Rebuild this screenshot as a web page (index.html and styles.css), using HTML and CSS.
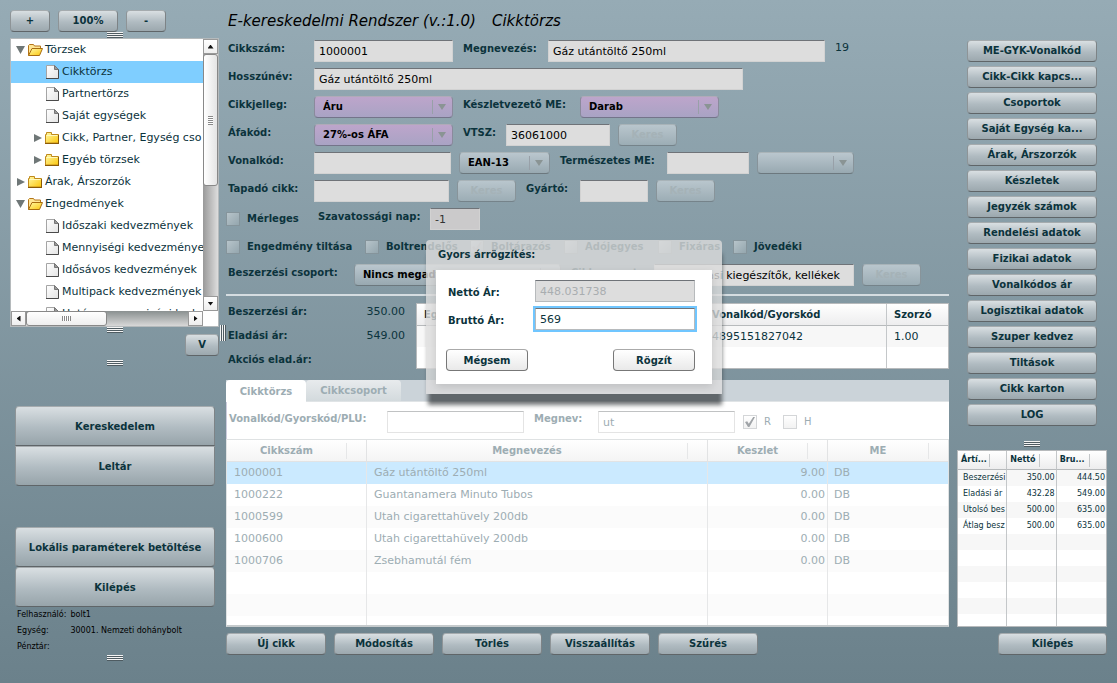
FILE: index.html
```html
<!DOCTYPE html>
<html lang="hu">
<head>
<meta charset="utf-8">
<title>E-kereskedelmi Rendszer</title>
<link rel="stylesheet" href="styles.css">
</head>
<body>
<svg class="defs" aria-hidden="true">
  <defs>
    <linearGradient id="gold" x1="0" y1="0" x2="1" y2="1"><stop offset="0" stop-color="#fff9a8"/><stop offset="1" stop-color="#fbc60a"/></linearGradient>
    <linearGradient id="paper" x1="0" y1="0" x2="1" y2="1"><stop offset="0" stop-color="#fff"/><stop offset="1" stop-color="#e4e4e4"/></linearGradient>
    <symbol id="doc" viewBox="0 0 13 14"><path d="M.5 .5h8l4 4v9H.5z" fill="url(#paper)" stroke="#a5a5a5"/><path d="M12.500 4v9.500H0" fill="none" stroke="#4a4a4a"/><path d="M8.500 .5v4h4z" fill="#999" stroke="#777"/></symbol>
    <symbol id="folder" viewBox="0 0 14 12"><path d="M.5 11V2.500h1V.5h5v2h7V11z" fill="url(#gold)" stroke="#c08a1c"/><path d="M1.500 3.500h11" stroke="#fff9bd"/><path d="M0 11.500h14M13.500 3v8" stroke="#8a5a06"/></symbol>
    <symbol id="folder-open" viewBox="0 0 15 12"><path d="M.5 11.500V1.500l1-1h4l1 1.500h6V5" fill="#ffe694" stroke="#b4751a"/><path d="M.5 11.500l3.500-7h10.500l-3 7z" fill="url(#gold)" stroke="#a86c10"/></symbol>
  </defs>
</svg>
<div class="app">
  <aside class="side">
    <div class="zoom">
      <button class="btn w40">+</button><button class="btn w60">100%</button><button class="btn w40">-</button>
    </div>
    <i class="grip"></i>
    <section class="tree">
      <ul class="tree-list">
        <li><b class="tw open"></b><svg class="fo"><use href="#folder-open"/></svg>Törzsek</li>
        <li class="leaf sel"><svg class="dc"><use href="#doc"/></svg>Cikktörzs</li>
        <li class="leaf"><svg class="dc"><use href="#doc"/></svg>Partnertörzs</li>
        <li class="leaf"><svg class="dc"><use href="#doc"/></svg>Saját egységek</li>
        <li class="sub"><b class="tw"></b><svg class="fc"><use href="#folder"/></svg>Cikk, Partner, Egység cso</li>
        <li class="sub"><b class="tw"></b><svg class="fc"><use href="#folder"/></svg>Egyéb törzsek</li>
        <li><b class="tw"></b><svg class="fc"><use href="#folder"/></svg>Árak, Árszorzók</li>
        <li><b class="tw open"></b><svg class="fo"><use href="#folder-open"/></svg>Engedmények</li>
        <li class="leaf"><svg class="dc"><use href="#doc"/></svg>Időszaki kedvezmények</li>
        <li class="leaf"><svg class="dc"><use href="#doc"/></svg>Mennyiségi kedvezmények</li>
        <li class="leaf"><svg class="dc"><use href="#doc"/></svg>Idősávos kedvezmények</li>
        <li class="leaf"><svg class="dc"><use href="#doc"/></svg>Multipack kedvezmények</li>
        <li class="leaf"><svg class="dc"><use href="#doc"/></svg>Határos mennyiségi kedv.</li>
      </ul>
      <div class="vbar"><b class="sb up"></b><div class="vthumb"></div><div class="vrest"></div><b class="sb down"></b></div>
      <div class="hbar"><b class="sb left"></b><div class="hthumb"></div><div class="hrest"></div><b class="sb next"></b></div>
    </section>
    <i class="grip"></i>
    <button class="btn vbtn">V</button>
    <i class="grip low"></i>
    <nav class="stack first"><button>Kereskedelem</button><button>Leltár</button></nav>
    <nav class="stack second"><button>Lokális paraméterek betöltése</button><button>Kilépés</button></nav>
    <dl class="user"><dt>Felhasználó:</dt><dd>bolt1</dd><dt>Egység:</dt><dd>30001. Nemzeti dohánybolt</dd><dt>Pénztár:</dt><dd></dd></dl>
    <i class="grip"></i>
  </aside>
  <div class="split"><i class="vgrip"></i></div>

  <main class="main">
    <h1><span>E-kereskedelmi Rendszer (v.:1.0)</span><span>Cikktörzs</span></h1>
    <form class="form">
      <div class="row"><label class="key" for="f1">Cikkszám:</label><input class="w139" id="f1" value="1000001"><label class="w77" for="f2">Megnevezés:</label><input class="w277" id="f2" value="Gáz utántöltő 250ml"><span>19</span></div>
      <div class="row"><label class="key" for="f3">Hosszúnév:</label><input class="w429" id="f3" value="Gáz utántöltő 250ml"></div>
      <div class="row"><label class="key" for="f4">Cikkjelleg:</label><span class="combo pink w139"><select id="f4"><option>Áru</option></select></span><label class="w109" for="f5">Készletvezető ME:</label><span class="combo pink w139"><select id="f5"><option>Darab</option></select></span></div>
      <div class="row"><label class="key" for="f6">Áfakód:</label><span class="combo pink w139"><select id="f6"><option>27%-os ÁFA</option></select></span><label class="w35" for="f7">VTSZ:</label><input class="w104" id="f7" value="36061000"><button type="button" class="btn off" disabled>Keres</button></div>
      <div class="row"><label class="key" for="f8">Vonalkód:</label><input class="w137" id="f8"><span class="combo w91"><select id="f9" aria-label="Vonalkód típusa"><option>EAN-13</option></select></span><label class="w99" for="f10">Természetes ME:</label><input class="w82" id="f10"><span class="combo w97"><select aria-label="Mértékegység"><option></option></select></span></div>
      <div class="row"><label class="key" for="f11">Tapadó cikk:</label><input class="w135" id="f11"><button type="button" class="btn off" disabled>Keres</button><label class="w46" for="f12">Gyártó:</label><input class="w68" id="f12"><button type="button" class="btn off" disabled>Keres</button></div>
      <div class="row"><label class="chk w80"><input type="checkbox">Mérleges</label><label class="w106" for="f13">Szavatossági nap:</label><input class="w50 dim" id="f13" value="-1"></div>
      <div class="row"><label class="chk w131"><input type="checkbox">Engedmény tiltása</label><label class="chk w97"><input type="checkbox">Boltrendelős</label><label class="chk w84"><input type="checkbox" checked>Boltárazós</label><label class="chk w84"><input type="checkbox">Adójegyes</label><label class="chk w65"><input type="checkbox">Fixáras</label><label class="chk"><input type="checkbox">Jövedéki</label></div>
      <div class="row"><label class="w118" for="f14">Beszerzési csoport:</label><span class="combo w207"><select id="f14"><option>Nincs megadva</option></select></span><label class="w75" for="f15">Cikkcsoport:</label><input class="w200" id="f15" value="Dohányzási kiegészítők, kellékek"><button type="button" class="btn off" disabled>Keres</button></div>
    </form>
    <hr>
    <section class="prices">
      <dl><dt>Beszerzési ár:</dt><dd>350.00</dd><dt>Eladási ár:</dt><dd>549.00</dd><dt>Akciós elad.ár:</dt><dd></dd></dl>
      <div class="codes-box">
      <table class="codes">
        <colgroup><col><col class="c182"><col class="c61"></colgroup>
        <thead><tr><th>Egység</th><th>Vonalkód/Gyorskód</th><th>Szorzó</th></tr></thead>
        <tbody><tr><td></td><td>4895151827042</td><td>1.00</td></tr><tr><td></td><td></td><td></td></tr></tbody>
      </table>
      </div>
    </section>
    <section class="browser">
      <div class="tabs"><button class="tab on">Cikktörzs</button><button class="tab">Cikkcsoport</button></div>
      <div class="search"><label class="w148" for="s1">Vonalkód/Gyorskód/PLU:</label><input class="w137" id="s1"><label class="w54" for="s2">Megnev:</label><input class="w137" id="s2" value="ut"><label class="chk"><input type="checkbox" checked>R</label><label class="chk"><input type="checkbox">H</label></div>
      <div class="list-box">
        <table class="list">
          <colgroup><col class="c140"><col><col class="c120"><col class="c120"></colgroup>
          <thead><tr><th>Cikkszám</th><th>Megnevezés</th><th>Keszlet</th><th>ME</th></tr></thead>
          <tbody>
            <tr class="cur"><td>1000001</td><td>Gáz utántöltő 250ml</td><td>9.00</td><td>DB</td></tr>
            <tr><td>1000222</td><td>Guantanamera Minuto Tubos</td><td>0.00</td><td>DB</td></tr>
            <tr><td>1000599</td><td>Utah cigarettahüvely 200db</td><td>0.00</td><td>DB</td></tr>
            <tr><td>1000600</td><td>Utah cigarettahüvely 200db</td><td>0.00</td><td>DB</td></tr>
            <tr><td>1000706</td><td>Zsebhamutál fém</td><td>0.00</td><td>DB</td></tr>
            <tr><td></td><td></td><td></td><td></td></tr>
            <tr><td></td><td></td><td></td><td></td></tr>
            <tr><td></td><td></td><td></td><td></td></tr>
          </tbody>
        </table>
      </div>
    </section>
    <div class="actions"><button class="btn">Új cikk</button><button class="btn">Módosítás</button><button class="btn">Törlés</button><button class="btn">Visszaállítás</button><button class="btn">Szűrés</button></div>
  </main>

  <aside class="right">
    <nav class="links">
      <button class="btn">ME-GYK-Vonalkód</button><button class="btn">Cikk-Cikk kapcs...</button><button class="btn">Csoportok</button><button class="btn">Saját Egység ka...</button><button class="btn">Árak, Árszorzók</button><button class="btn">Készletek</button><button class="btn">Jegyzék számok</button><button class="btn">Rendelési adatok</button><button class="btn">Fizikai adatok</button><button class="btn">Vonalkódos ár</button><button class="btn">Logisztikai adatok</button><button class="btn">Szuper kedvez</button><button class="btn">Tiltások</button><button class="btn">Cikk karton</button><button class="btn">LOG</button>
    </nav>
    <i class="grip"></i>
    <div class="sum-box">
      <table class="sum">
        <thead><tr><th>Ártí...</th><th>Nettó</th><th>Bru...</th></tr></thead>
        <tbody>
          <tr><td>Beszerzési</td><td>350.00</td><td>444.50</td></tr>
          <tr><td>Eladási ár</td><td>432.28</td><td>549.00</td></tr>
          <tr><td>Utolsó bes</td><td>500.00</td><td>635.00</td></tr>
          <tr><td>Átlag besz</td><td>500.00</td><td>635.00</td></tr>
          <tr><td></td><td></td><td></td></tr><tr><td></td><td></td><td></td></tr><tr><td></td><td></td><td></td></tr><tr><td></td><td></td><td></td></tr><tr><td></td><td></td><td></td></tr><tr><td></td><td></td><td></td></tr>
        </tbody>
      </table>
    </div>
    <button class="btn exit">Kilépés</button>
  </aside>
</div>

<div class="dialog" role="dialog" aria-labelledby="dlg">
  <h2 id="dlg">Gyors árrögzítés:</h2>
  <form class="dialog-body">
    <div class="drow"><label for="d1">Nettó Ár:</label><input id="d1" value="448.031738" disabled></div>
    <div class="drow"><label for="d2">Bruttó Ár:</label><input id="d2" class="focus" value="569"></div>
    <div class="dbtns"><button type="button">Mégsem</button><button type="button">Rögzít</button></div>
  </form>
</div>
</body>
</html>
```
FILE: styles.css
```css
* { box-sizing: border-box; }
body {
  margin: 0;
  font: 11px/16px Verdana, "DejaVu Sans", sans-serif;
  color: #0b333c;
  background: linear-gradient(#96abb5, #6b818b) fixed;
}
h1, h2, dl, dd, ul { margin: 0; padding: 0; }
label, dt, th, button, select { font-weight: bold; font-size: 10px; }
button, input, select { font-family: inherit; color: inherit; margin: 0; }
.defs { position: absolute; width: 0; height: 0; }
.app { display: flex; min-height: 100vh; }

/* buttons */
.btn {
  height: 22px; padding: 0; line-height: 16px; white-space: nowrap;
  border: 1px solid; border-color: #a5abae #7d8386 #5f6568 #8e9497; border-radius: 4px;
  background: linear-gradient(#d9dfe2, #b0bbc1 55%, #9ca8ae);
}
.btn.off {
  width: 59px; color: #a5b2b7; border-color: #a8b3b8 #88949a #75838a #88949a;
  background: linear-gradient(#b9c6cd, #9cadb5);
}
.grip {
  display: block; flex: none; width: 16px; height: 6px; align-self: center;
  background: repeating-linear-gradient(#f4f4f4 0 1px, #4e5b61 1px 2px);
}
.vgrip {
  display: block; width: 6px; height: 16px;
  background: repeating-linear-gradient(90deg, #f4f4f4 0 1px, #4e5b61 1px 2px);
}

/* left column */
.side { width: 219px; padding: 10px 0 0 10px; display: flex; flex-direction: column; }
.zoom { display: flex; gap: 8px; }
.w40 { width: 40px; }
.w60 { width: 60px; }
.tree {
  display: grid; grid-template: 272px 15px / minmax(0, 1fr) 15px;
  border: 1px solid #b5babc; background: #fff; overflow: hidden;
}
.tree-list { list-style: none; overflow: hidden; }
.tree-list li { height: 22px; display: flex; align-items: center; gap: 2px; padding-left: 5px; white-space: nowrap; }
.tree-list .leaf { padding-left: 35px; gap: 3px; }
.tree-list .sub { padding-left: 22px; }
.tree-list .sel { background: #7fceff; }
.tw { flex: none; width: 10px; height: 8px; background: #6f7777; clip-path: polygon(10% 0, 90% 50%, 10% 100%); }
.tw.open { clip-path: polygon(0 0, 90% 0, 45% 100%); }
.fo { flex: none; width: 15px; height: 12px; }
.fc { flex: none; width: 14px; height: 12px; margin-right: 1px; }
.dc { flex: none; width: 13px; height: 14px; }
.vbar { display: flex; flex-direction: column; background: linear-gradient(90deg, #999, #ddd); }
.hbar { display: flex; background: linear-gradient(#8a9090, #d8d8d8); }
.sb { flex: none; width: 15px; height: 15px; border: 1px solid #999; background: linear-gradient(#fff, #eee); display: grid; place-items: center; }
.sb::after { content: ""; width: 6px; height: 4px; background: #111; clip-path: polygon(50% 0, 100% 100%, 0 100%); }
.down::after { clip-path: polygon(0 0, 100% 0, 50% 100%); }
.left::after { width: 4px; height: 6px; clip-path: polygon(100% 0, 100% 100%, 0 50%); }
.next::after { width: 4px; height: 6px; clip-path: polygon(0 0, 100% 50%, 0 100%); }
.vthumb, .hthumb { border: 1px solid #888; border-radius: 3px; display: grid; place-items: center; }
.vthumb { height: 132px; background: linear-gradient(90deg, #fff, #e4e4e4); }
.vthumb::after { content: ""; width: 5px; height: 9px; background: repeating-linear-gradient(#888 0 1px, #fff 1px 2px); }
.hthumb { width: 81px; background: linear-gradient(#fff, #eee); }
.hthumb::after { content: ""; width: 9px; height: 5px; background: repeating-linear-gradient(90deg, #888 0 1px, #fff 1px 2px); }
.vrest, .hrest { flex: 1; }
.vbtn { width: 34px; align-self: flex-end; margin-top: 1px; }
.grip.low { margin-top: 4px; }
.stack { display: flex; flex-direction: column; margin: 40px 4px 0 5px; }
.stack.second { margin-top: 41px; }
.stack button {
  height: 40px; border: 1px solid; border-color: #a5abae #7d8386 #5f6568 #8e9497;
  background: linear-gradient(#d9dfe2, #b0bbc1 55%, #97a4aa);
}
.first button:first-child { border-radius: 4px 4px 0 0; }
.first button:last-child { border-radius: 0 0 4px 4px; }
.second button { border-radius: 4px; }
.user { display: grid; grid-template-columns: auto 1fr; padding-left: 7px; color: #000; font-size: 8px; line-height: 16px; column-gap: 4px; }
.user dt { font-size: 8px; font-weight: normal; min-width: 47px; }
.user dd { min-height: 16px; }
.split { width: 7px; padding: 325px 0 0 1px; }

/* form */
.main { flex: 1; min-width: 0; display: flex; flex-direction: column; padding: 10px 0 28px; }
h1 { display: flex; gap: 16px; font-size: 15px; font-weight: normal; font-style: italic; line-height: 22px; padding-left: 2px; margin-bottom: 8px; color: #000; }
.form { display: flex; flex-direction: column; gap: 6px; }
.row { display: flex; gap: 8px; height: 22px; padding-left: 2px; white-space: nowrap; }
.row > * { flex: none; }
.row > label:not(.chk) { margin-left: 2px; padding-top: 1px; }
.row > label:first-child:not(.chk) { margin-left: 0; }
.row > span:last-child:not(.combo) { margin-left: 2px; }
.row input, .search input, .drow input {
  height: 22px; padding: 0 4px; font-size: 11px; color: #000; background: #ddd;
  border: 1px solid #d2d2d2; border-top-color: #6f7378; border-radius: 0;
}
.key { width: 78px; }
.w35 { width: 35px; }
.w46 { width: 46px; }
.w50 { width: 50px; }
.w54 { width: 54px; }
.w65 { width: 67px; }
.w68 { width: 68px; }
.w75 { width: 75px; }
.w77 { width: 77px; }
.w80 { width: 82px; }
.w82 { width: 82px; }
.w84 { width: 86px; }
.w91 { width: 91px; }
.w97 { width: 97px; }
.w99 { width: 99px; }
.w104 { width: 104px; }
.w106 { width: 104px; }
.w109 { width: 109px; }
.w118 { width: 118px; }
.w131 { width: 131px; }
.w135 { width: 135px; }
.w137 { width: 137px; }
.w139 { width: 139px; }
.w148 { width: 148px; }
.w200 { width: 200px; }
.w207 { width: 207px; }
.w277 { width: 277px; }
.w429 { width: 429px; }
.row input.dim { background: #cbcacb; color: #333; }
.combo { display: grid; align-items: center; }
.combo > *, .combo::after, .combo::before { grid-area: 1 / 1; }
.combo select {
  appearance: none; width: 100%; height: 22px; padding: 0 22px 0 8px; line-height: 18px; color: #000;
  border: 1px solid; border-color: #aab4b8 #87939a #6c787e #87939a; border-radius: 4px;
  background: linear-gradient(#bac7ce, #98a9b1);
}
.combo.pink select { background: linear-gradient(#bda5cb, #a9a3c4); border-color: #b0aab8 #8a8a9c #74748a #8a8a9c; }
.combo::after { content: ""; z-index: 1; justify-self: end; margin-right: 7px; width: 8px; height: 6px; background: #8a9494; clip-path: polygon(0 0, 100% 0, 50% 100%); }
.combo::before { content: ""; z-index: 1; justify-self: end; margin-right: 20px; width: 1px; height: 14px; background: #98a0a8; }
.chk { display: flex; align-items: center; gap: 7px; }
.row .chk:first-child { margin-left: -2px; }
.row .chk input, .search .chk input {
  appearance: none; width: 14px; height: 14px; padding: 0; display: grid; place-items: center;
  border: 1px solid #85949b; background: linear-gradient(135deg, #b7c4ca, #94a6ae);
}
.chk input:checked::after { content: ""; width: 10px; height: 10px; background: #a0a4a8; clip-path: polygon(0 50%, 22% 42%, 38% 68%, 82% 0, 100% 0, 44% 100%, 30% 100%); }
hr { width: 100%; height: 2px; margin: 8px 0 7px; border: 0; background: #d5dde1; }

/* prices */
.prices { display: flex; gap: 11px; }
.prices dl { width: 179px; padding: 1px 0 0 2px; display: grid; grid-template-columns: 1fr auto; grid-auto-rows: 24px; }
.prices dd { text-align: right; }
table { border-collapse: separate; border-spacing: 0; width: 100%; table-layout: fixed; }
th, td { padding: 0 7px; white-space: nowrap; overflow: hidden; text-align: left; border-right: 1px solid #c4c7c9; }
th:last-child, td:last-child { border-right: 0; }
th { background: linear-gradient(#fff, #ededee); border-bottom: 1px solid #b7babc; }
tbody tr { background: #fff; }
tbody tr:nth-child(odd) { background: #f7f7f7; }
.codes-box { flex: 1; align-self: flex-start; border: 1px solid #b7babc; }
.codes th, .codes td { height: 21px; }
.codes th { height: 22px; }
.c182 { width: 182px; }
.c61 { width: 61px; }
.c140 { width: 140px; }
.c120 { width: 120px; }

/* article browser */
.browser { flex: 1; display: flex; flex-direction: column; margin-top: 4px; color: #9dadb3; }
.tabs { display: flex; background: #cbd3d9; height: 22px; border-bottom: 1px solid #e0e4e6; }
.tab { border: 0; border-radius: 4px 4px 0 0; padding: 0; width: 95px; background: linear-gradient(#e8ebed, #d3dadd); }
.tab.on { width: 80px; height: 22px; background: #fff; }
.search { display: flex; gap: 10px; padding: 9px 2px 6px; background: #fff; border-left: 1px solid #ccd; white-space: nowrap; }
.search > * { flex: none; }
.search input { color: inherit; background: #fff; border-color: #c0c2c3 #e4e4e4 #e4e4e4; }
.search .chk { font-size: 10px; font-weight: normal; gap: 7px; margin-left: -2px; }
.search .chk + .chk { margin-left: 2px; }
.search .chk input { background: linear-gradient(#fff, #f2f2f2); border-color: #d4d6d8; }
.list-box { flex: 1 1 0; min-height: 0; overflow: hidden; background: #fff; border: 1px solid #dfe2e3; border-bottom: 2px solid #c5cacc; }
.list th {
  height: 22px; text-align: center; border-color: #e2e3e4; padding: 0 27px 0 7px;
  background: linear-gradient(#e6e7e8, #e6e7e8) right 19px center / 1px 16px no-repeat, linear-gradient(#fff, #f4f4f4);
}
.list td { height: 22px; border-color: #e6e7e8; }
.list td:nth-child(3) { text-align: right; padding-right: 2px; }
.list td:nth-child(4) { padding-left: 6px; }
.list tbody tr:nth-child(odd) { background: #fbfbfb; }
.list tbody tr.cur { background: #cbeaff; }
.actions { display: flex; gap: 8px; margin-top: 6px; }
.actions .btn { width: 100px; }

/* right column */
.right { width: 168px; padding: 40px 10px 28px 8px; display: flex; flex-direction: column; }
.links { display: flex; flex-direction: column; gap: 4px; margin: 0 10px 15px; }
.right .grip { margin-bottom: 3px; }
.sum-box { flex: 1 1 0; min-height: 0; overflow: hidden; border: 1px solid #b7babc; background: #fff; }
.sum { font-size: 8px; line-height: 12px; }
.sum th { height: 19px; font-size: 8px; padding: 0 3px; background: linear-gradient(#c4c7c9, #c4c7c9) right 16px center / 1px 13px no-repeat, linear-gradient(#fff, #ededee); }
.sum td { height: 16px; padding: 0 1px; text-align: right; }
.sum td:first-child { text-align: left; padding: 0 0 0 5px; }
.exit { width: 109px; margin-top: 6px; align-self: flex-end; }

/* dialog */
.dialog {
  position: absolute; z-index: 2; left: 426px; top: 240px; width: 296px; padding: 7px 10px 10px;
  border-radius: 4px 4px 0 0; background: rgba(220, 220, 220, .8);
  box-shadow: 1px 12px 4px -1px rgba(40, 45, 48, .65);
}
.dialog h2 { font-size: 10px; line-height: 16px; padding: 0 2px; margin-bottom: 7px; }
.dialog-body { background: #fff; padding: 10px 17px 13px 10px; box-shadow: 0 3px 8px rgba(0, 0, 0, .12); }
.drow { display: flex; justify-content: space-between; align-items: center; margin-bottom: 6px; padding-left: 2px; }
.drow label { padding-top: 4px; }
.drow input { width: 160px; background: #fff; border-color: #6f7378 #b7babc #b7babc; color: #0b333c; }
.drow input:disabled { background: #ddd; color: #a9adb0; }
.drow .focus { outline: 2px solid #70c6ff; }
.dbtns { display: flex; justify-content: space-between; margin-top: 19px; }
.dbtns button { width: 82px; height: 22px; padding: 0; border: 1px solid #777; border-top-color: #aaa; border-radius: 4px; background: linear-gradient(#fff, #e9e9e9); }
```
